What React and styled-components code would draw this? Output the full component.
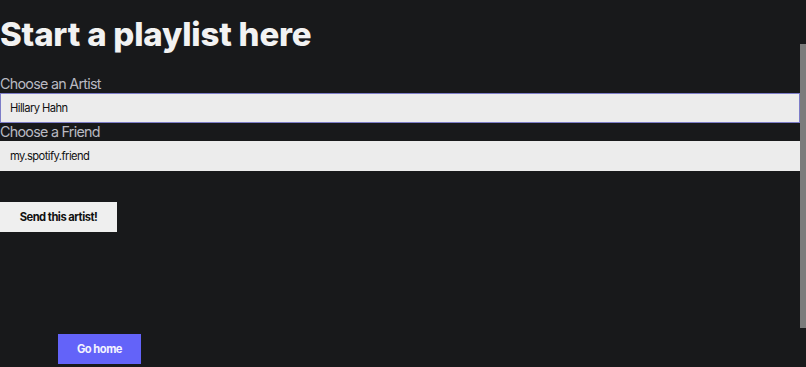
import React from "react";
import styled, { createGlobalStyle } from "styled-components";

const Global = createGlobalStyle`
  html, body {
    margin: 0;
    padding: 0;
    background: #18191b;
    font-family: Inter, "Noto Sans", sans-serif;
    overflow: hidden;
  }
`;

const Page = styled.div`
  width: 800px;
  height: 367px;
  display: flex;
  flex-direction: column;
`;

const Title = styled.h1`
  margin: 15px 0 0;
  font-size: 33px;
  line-height: 38px;
  font-weight: 800;
  color: #f2f2f2;
  letter-spacing: -0.2px;
`;

const Form = styled.form`
  display: flex;
  flex-direction: column;
  margin-top: 22px;
`;

const Label = styled.label`
  font-size: 14.3px;
  line-height: 18px;
  color: #b9b9c2;
  font-weight: 400;
  letter-spacing: -0.05em;
`;

const Input = styled.input`
  box-sizing: border-box;
  width: 800px;
  height: 30px;
  margin: 0;
  padding: 0 9px;
  border: 1px solid ${(p) => (p.$focused ? "#7d7dc8" : "#ececec")};
  background: #ececec;
  color: #111;
  font-family: Inter, sans-serif;
  font-size: 11.2px;
  letter-spacing: -0.05em;
  outline: none;
`;

const Button = styled.button`
  box-sizing: border-box;
  align-self: flex-start;
  height: 30px;
  border: none;
  border-radius: 0;
  font-family: Inter, sans-serif;
  font-size: 11.2px;
  font-weight: 650;
  letter-spacing: -0.045em;
  cursor: pointer;
  background: ${(p) => (p.$primary ? "#6363f9" : "#efefef")};
  color: ${(p) => (p.$primary ? "#f4f4ff" : "#111")};
`;

const SendButton = styled(Button)`
  width: 117px;
  margin-top: 31px;
`;

const HomeButton = styled(Button)`
  width: 83px;
  margin: auto 0 3px 58px;
`;

const Scroll = styled.div`
  position: fixed;
  right: 0;
  top: 44px;
  width: 6px;
  height: 284px;
  background: #7b7b7b;
`;

export default function App() {
  return (
    <>
      <Global />
      <Page>
        <Title>Start a playlist here</Title>
        <Form onSubmit={(e) => e.preventDefault()}>
          <Label>Choose an Artist</Label>
          <Input $focused defaultValue="Hillary Hahn" />
          <Label>Choose a Friend</Label>
          <Input defaultValue="my.spotify.friend" />
          <SendButton>Send this artist!</SendButton>
        </Form>
        <HomeButton $primary>Go home</HomeButton>
      </Page>
      <Scroll />
    </>
  );
}
